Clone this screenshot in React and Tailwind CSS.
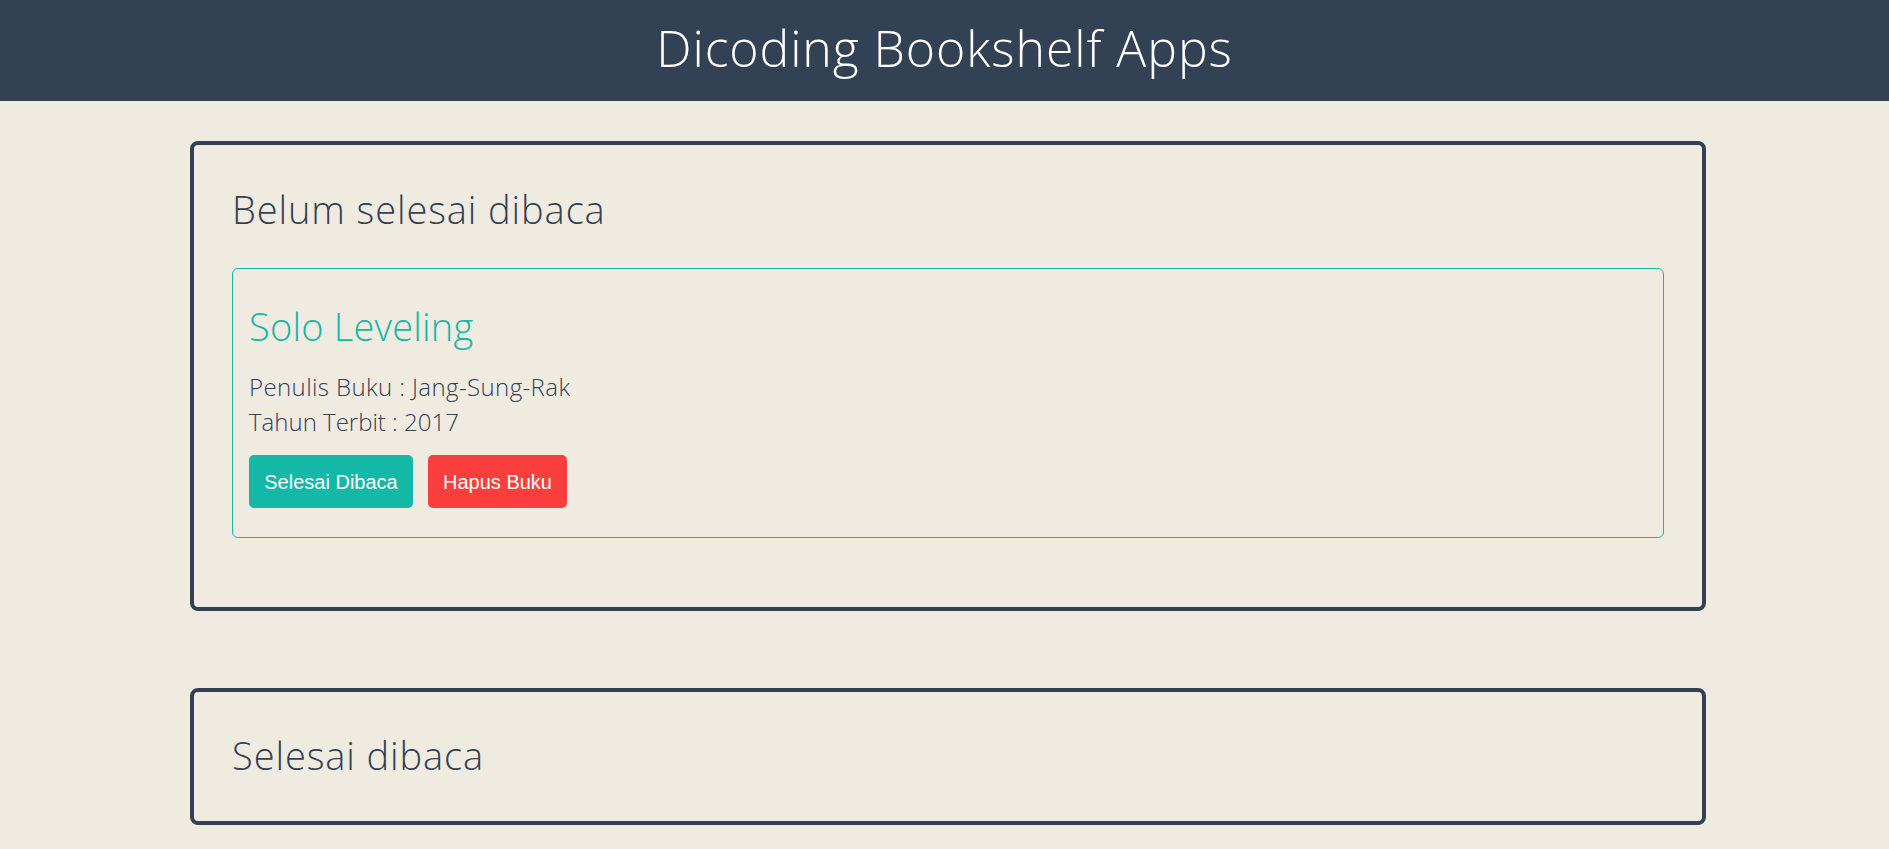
import React, { useState } from 'react';

const font = { fontFamily: '"Open Sans", "Liberation Sans", sans-serif' };

const initialBooks = [
  { id: 1, title: 'Solo Leveling', author: 'Jang-Sung-Rak', year: 2017, isComplete: false },
];

const BookItem = ({ book, onToggle, onDelete }) => (
  <article className="border border-[#14b8a6] rounded-[6px] pt-[33px] pb-[29px] px-[16px] mb-[29px]">
    <h3 className="text-[38px] leading-[48px] font-light text-[#14b8a6] tracking-[0.2px] mb-[19px]">{book.title}</h3>
    <p className="text-[24px] leading-[35px] font-extralight text-[#334155] tracking-[0.4px]">Penulis Buku : {book.author}</p>
    <p className="text-[24px] leading-[35px] font-extralight text-[#334155]">Tahun Terbit : {book.year}</p>
    <div className="flex gap-[15px] mt-[16px]" style={{ fontFamily: '"Liberation Sans", Arial, sans-serif' }}>
      <button
        onClick={() => onToggle(book.id)}
        className="h-[53px] w-[164px] rounded-[5px] bg-[#14b8a6] text-white text-[20px]"
      >
        {book.isComplete ? 'Belum Selesai' : 'Selesai Dibaca'}
      </button>
      <button
        onClick={() => onDelete(book.id)}
        className="h-[53px] w-[139px] rounded-[5px] bg-[#fa3e3e] text-white text-[20px]"
      >
        Hapus Buku
      </button>
    </div>
  </article>
);

const App = () => {
  const [books, setBooks] = useState(initialBooks);

  const toggleBook = (id) =>
    setBooks(books.map((b) => (b.id === id ? { ...b, isComplete: !b.isComplete } : b)));
  const deleteBook = (id) => setBooks(books.filter((b) => b.id !== id));

  const unread = books.filter((b) => !b.isComplete);
  const read = books.filter((b) => b.isComplete);

  return (
    <div className="min-h-screen bg-[#f0ebe1]" style={font}>
      {/* Header */}
      <header className="h-[101px] pb-[6px] bg-[#334155] flex items-center justify-center">
        <h1 className="text-[50px] leading-[50px] font-light text-white tracking-[0.9px]">Dicoding Bookshelf Apps</h1>
      </header>

      <main className="pt-[40px] pb-[40px]">
        <section className="ml-[190px] w-[1516px] border-4 border-[#334155] rounded-[8px] pt-[39px] pb-[40px] px-[38px]">
          <h2 className="text-[38px] leading-[50px] font-light text-[#334155] tracking-[0.9px] mb-[34px]">Belum selesai dibaca</h2>
          {unread.map((book) => (
            <BookItem key={book.id} book={book} onToggle={toggleBook} onDelete={deleteBook} />
          ))}
        </section>

        <section className="ml-[190px] w-[1516px] mt-[77px] border-4 border-[#334155] rounded-[8px] pt-[38px] pb-[41px] px-[38px]">
          <h2 className="text-[38px] leading-[50px] font-light text-[#334155] tracking-[0.9px]">Selesai dibaca</h2>
          {read.map((book) => (
            <BookItem key={book.id} book={book} onToggle={toggleBook} onDelete={deleteBook} />
          ))}
        </section>
      </main>
    </div>
  );
};

export default App;
